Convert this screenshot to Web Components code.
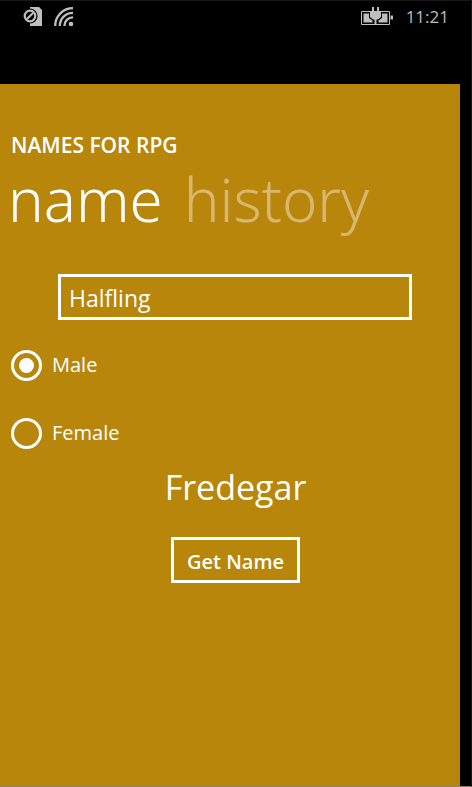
<!DOCTYPE html>
<html lang="en">
<head>
<meta charset="utf-8">
<meta name="viewport" content="width=device-width, initial-scale=1">
<title>Names for RPG</title>
<style>
    body {
        margin: 0;
        background-color: black;
        color: white;
        font-family: "Segoe UI", "Open Sans", "Noto Sans", sans-serif;
    }
</style>
</head>
<body>
<phone-screen>
    <status-bar slot="status" time="11:21"></status-bar>
    <name-pivot app="NAMES FOR RPG">
        <a slot="tabs" href="#name" aria-current="page">name</a>
        <a slot="tabs" href="#history">history</a>
        <name-form></name-form>
    </name-pivot>
</phone-screen>

<template id="phone-screen">
<style>
    :host {
        display: flex;
        flex-direction: column;
        box-sizing: border-box;
        min-height: 100vh;
        border-top: 1px solid rgb(24, 24, 24);
        border-right: 1px solid rgb(24, 24, 24);
        border-bottom: 1px solid rgb(140, 130, 105);
    }

    .page {
        display: flex;
        flex-grow: 1;
        margin-right: 11px;
    }
</style>
<slot name="status"></slot>
<main class="page"><slot></slot></main>
</template>

<template id="status-bar">
<style>
    :host {
        display: flex;
        justify-content: space-between;
        box-sizing: border-box;
        height: 83px;
        padding: 3px 22px 0 23px;
        color: rgb(190, 190, 190);
    }

    .group {
        display: flex;
        align-items: center;
        height: 26px;
        gap: 11px;
    }

    .right {
        gap: 13px;
    }

    svg {
        display: block;
    }

    .time {
        font-size: 17px;
        line-height: 26px;
    }
</style>
<div class="group">
    <svg width="20" height="20" viewBox="0 0 20 20" fill="none" aria-hidden="true">
        <path fill="currentColor" d="M7 0h9l3 3v16H7z"/>
        <circle cx="7" cy="9" r="7.6" fill="black"/>
        <circle cx="7" cy="9" r="5.3" stroke="currentColor" stroke-width="2.2"/>
        <path stroke="currentColor" stroke-width="2.2" d="M4 12l6-6"/>
    </svg>
    <svg width="20" height="20" viewBox="0 0 20 20" fill="none" stroke="currentColor" stroke-width="2.3" aria-hidden="true">
        <path d="M1.2 19C1.2 9 9 1.2 19 1.2M5.8 19C5.8 11.5 11.5 5.8 19 5.8M10.4 19C10.4 14 14 10.4 19 10.4"/>
        <circle cx="17" cy="17" r="2.3" fill="currentColor" stroke="none"/>
    </svg>
</div>
<div class="group right">
    <svg width="32" height="20" viewBox="0 0 32 20" fill="none" aria-hidden="true">
        <path stroke="currentColor" stroke-width="1" d="M9 4.5H.5v13h28v-13H20"/>
        <path fill="currentColor" d="M2.500 6.500H8v4.500l3.500 2.500v2h-9zM26.500 6.500H21v4.500l-3.500 2.500v2h9zM29.500 8.500H32v4h-2.500z"/>
        <path fill="currentColor" d="M11 0h2v4h3V0h2v4h2v6l-3 2.500h-1.500V18h-2v-5.500H12L9 10V4h2z"/>
    </svg>
    <span class="time"></span>
</div>
</template>

<template id="name-pivot">
<style>
    :host {
        display: block;
        flex-grow: 1;
        min-width: 0;
        padding: 47px 0 24px 11px;
        background-color: rgb(184, 134, 11);
    }

    h1 {
        margin: 0;
        font-size: 21px;
        font-weight: 600;
        line-height: 28px;
    }

    nav {
        display: flex;
        gap: 21px;
        margin-left: -3px;
        margin-bottom: 35px;
    }

    ::slotted(a) {
        color: rgb(216, 184, 112);
        font-family: "Segoe UI", "Noto Sans", sans-serif;
        font-size: 60px;
        font-weight: 300;
        line-height: 80px;
        text-decoration: none;
    }

    ::slotted(a[aria-current]) {
        color: white;
    }
</style>
<h1></h1>
<nav><slot name="tabs"></slot></nav>
<slot></slot>
</template>

<template id="name-form">
<style>
    :host {
        display: block;
    }

    form {
        display: flex;
        flex-direction: column;
        align-items: center;
    }

    select, button {
        box-sizing: border-box;
        height: 46px;
        margin: 0;
        border: 3px solid white;
        border-radius: 0;
        background-color: transparent;
        color: inherit;
        font-family: inherit;
    }

    select {
        appearance: none;
        align-self: stretch;
        margin: 0 48px 0 47px;
        padding: 2px 8px 0;
        font-size: 23px;
    }

    option {
        background-color: rgb(184, 134, 11);
    }

    fieldset {
        display: flex;
        flex-direction: column;
        align-self: stretch;
        gap: 36px;
        min-width: 0;
        margin: 29px 0 0;
        padding: 0;
        border: none;
    }

    output {
        margin-top: 12px;
        font-size: 34px;
        line-height: 52px;
    }

    button {
        margin-top: 24px;
        padding: 2px 13px 0;
        font-size: 20px;
        font-weight: 600;
        cursor: pointer;
    }

    label {
        display: flex;
        align-items: center;
        align-self: flex-start;
        gap: 10px;
        font-size: 20px;
        line-height: 32px;
    }

    input {
        display: grid;
        place-items: center;
        appearance: none;
        box-sizing: border-box;
        width: 31px;
        height: 31px;
        margin: 0;
        border: 3px solid white;
        border-radius: 50%;
    }

    input:checked::before {
        content: "";
        width: 15px;
        height: 15px;
        border-radius: 50%;
        background-color: white;
    }
</style>
<form>
    <select aria-label="Race">
        <option>Halfling</option>
    </select>
    <fieldset aria-label="Gender">
        <label for="male"><input id="male" type="radio" name="gender" checked>Male</label>
        <label for="female"><input id="female" type="radio" name="gender">Female</label>
    </fieldset>
    <output>Fredegar</output>
    <button type="button">Get Name</button>
</form>
</template>

<script>
function attach(element, id) {
  const root = element.attachShadow({ mode: 'open' });
  root.appendChild(document.getElementById(id).content.cloneNode(true));
  return root;
}

class PhoneScreen extends HTMLElement {
  constructor() {
    super();
    attach(this, 'phone-screen');
  }
}

class StatusBar extends HTMLElement {
  constructor() {
    super();
    const root = attach(this, 'status-bar');
    root.querySelector('.time').textContent = this.getAttribute('time');
  }
}

class NamePivot extends HTMLElement {
  constructor() {
    super();
    const root = attach(this, 'name-pivot');
    root.querySelector('h1').textContent = this.getAttribute('app');
  }
}

class NameForm extends HTMLElement {
  constructor() {
    super();
    attach(this, 'name-form');
  }
}

customElements.define('phone-screen', PhoneScreen);
customElements.define('status-bar', StatusBar);
customElements.define('name-pivot', NamePivot);
customElements.define('name-form', NameForm);
</script>
</body>
</html>
